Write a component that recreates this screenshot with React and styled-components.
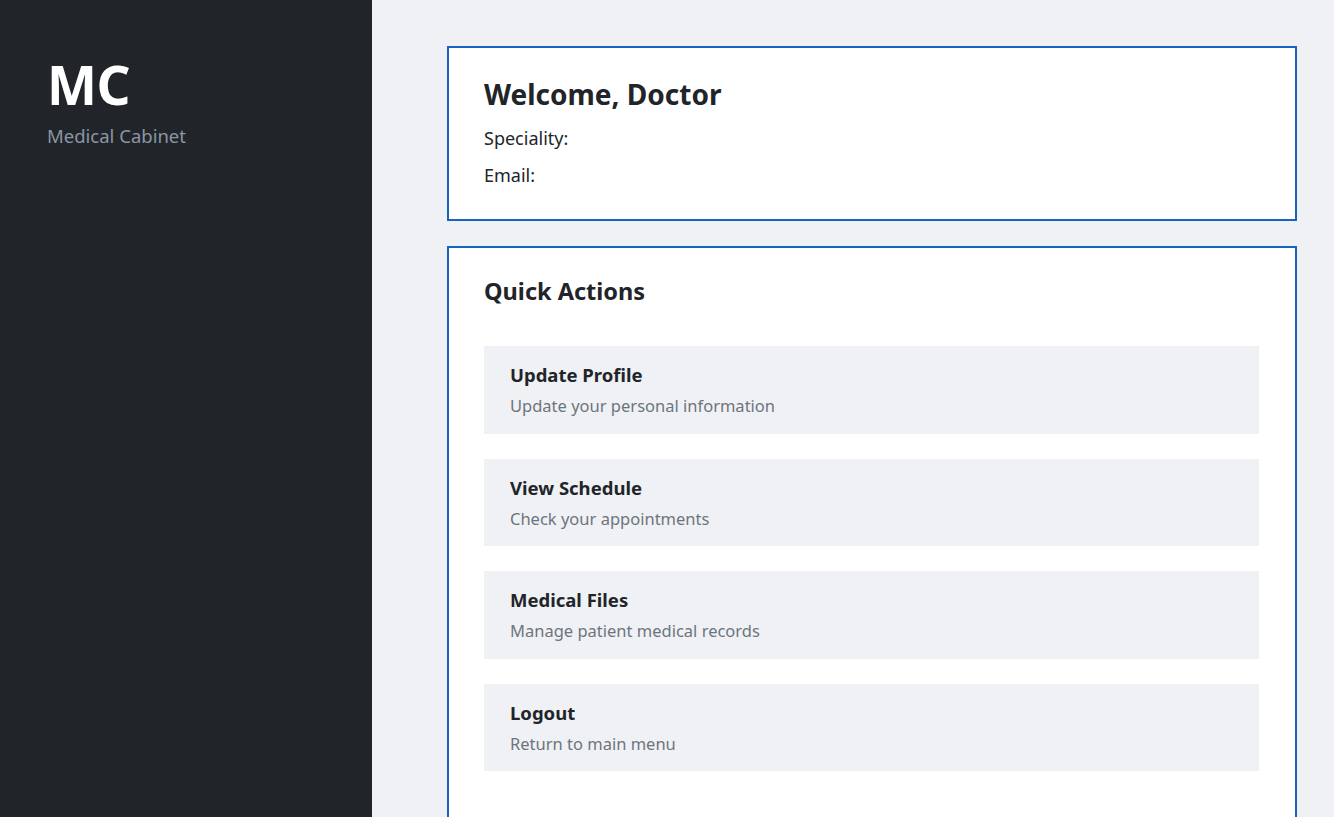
import React from "react";
import styled, { createGlobalStyle } from "styled-components";

const Global = createGlobalStyle`
  html, body { margin: 0; padding: 0; }
  body {
    font-family: "Noto Sans", "Open Sans", sans-serif;
    background: #f0f1f5;
    color: #212529;
  }
  * { box-sizing: border-box; }
`;

const Layout = styled.div`
  display: flex;
  min-height: 817px;
`;

const Sidebar = styled.aside`
  width: 372px;
  flex: 0 0 372px;
  background: #212529;
  padding: 53px 0 0 47px;
`;

const Logo = styled.div`
  font-size: 53px;
  font-weight: 700;
  color: #ffffff;
  line-height: 1.2;
  letter-spacing: -0.5px;
`;

const Tagline = styled.div`
  font-size: 18.5px;
  color: #8b95a5;
  margin-top: 7px;
  line-height: 1.3;
`;

const Main = styled.main`
  flex: 1;
  padding: 46px 37px 0 75px;
  display: flex;
  flex-direction: column;
  gap: 25px;
`;

const Card = styled.section`
  background: #ffffff;
  border: 2px solid #1565c0;
  padding: ${(p) => p.$pad || "28px 36px 30px 35px"};
`;

const Title = styled.h1`
  margin: 0 0 13px;
  font-size: 28px;
  font-weight: 700;
  line-height: 1.3;
`;

const InfoLine = styled.p`
  margin: 0 0 11px;
  font-size: 18px;
  line-height: 1.45;
  &:last-child { margin-bottom: 0; }
`;

const SectionTitle = styled.h2`
  margin: 0 0 40px;
  font-size: 23.5px;
  font-weight: 700;
  line-height: 1.3;
`;

const ActionList = styled.div`
  display: flex;
  flex-direction: column;
  gap: 25px;
`;

const Action = styled.div`
  background: #f0f1f5;
  padding: 16px 26px;
  height: 87.5px;
  cursor: pointer;
`;

const ActionTitle = styled.div`
  font-size: 18.5px;
  font-weight: 700;
  line-height: 1.4;
  color: #212529;
`;

const ActionDesc = styled.div`
  font-size: 16.5px;
  color: #6c757d;
  line-height: 1.45;
  margin-top: 6px;
`;

const actions = [
  { title: "Update Profile", desc: "Update your personal information" },
  { title: "View Schedule", desc: "Check your appointments" },
  { title: "Medical Files", desc: "Manage patient medical records" },
  { title: "Logout", desc: "Return to main menu" },
];

export default function App() {
  return (
    <>
      <Global />
      <Layout>
        <Sidebar>
          <Logo>MC</Logo>
          <Tagline>Medical Cabinet</Tagline>
        </Sidebar>
        <Main>
          <Card>
            <Title>Welcome, Doctor</Title>
            <InfoLine>Speciality:</InfoLine>
            <InfoLine>Email:</InfoLine>
          </Card>
          <Card $pad="28px 36px 60px 35px">
            <SectionTitle>Quick Actions</SectionTitle>
            <ActionList>
              {actions.map((a) => (
                <Action key={a.title}>
                  <ActionTitle>{a.title}</ActionTitle>
                  <ActionDesc>{a.desc}</ActionDesc>
                </Action>
              ))}
            </ActionList>
          </Card>
        </Main>
      </Layout>
    </>
  );
}
